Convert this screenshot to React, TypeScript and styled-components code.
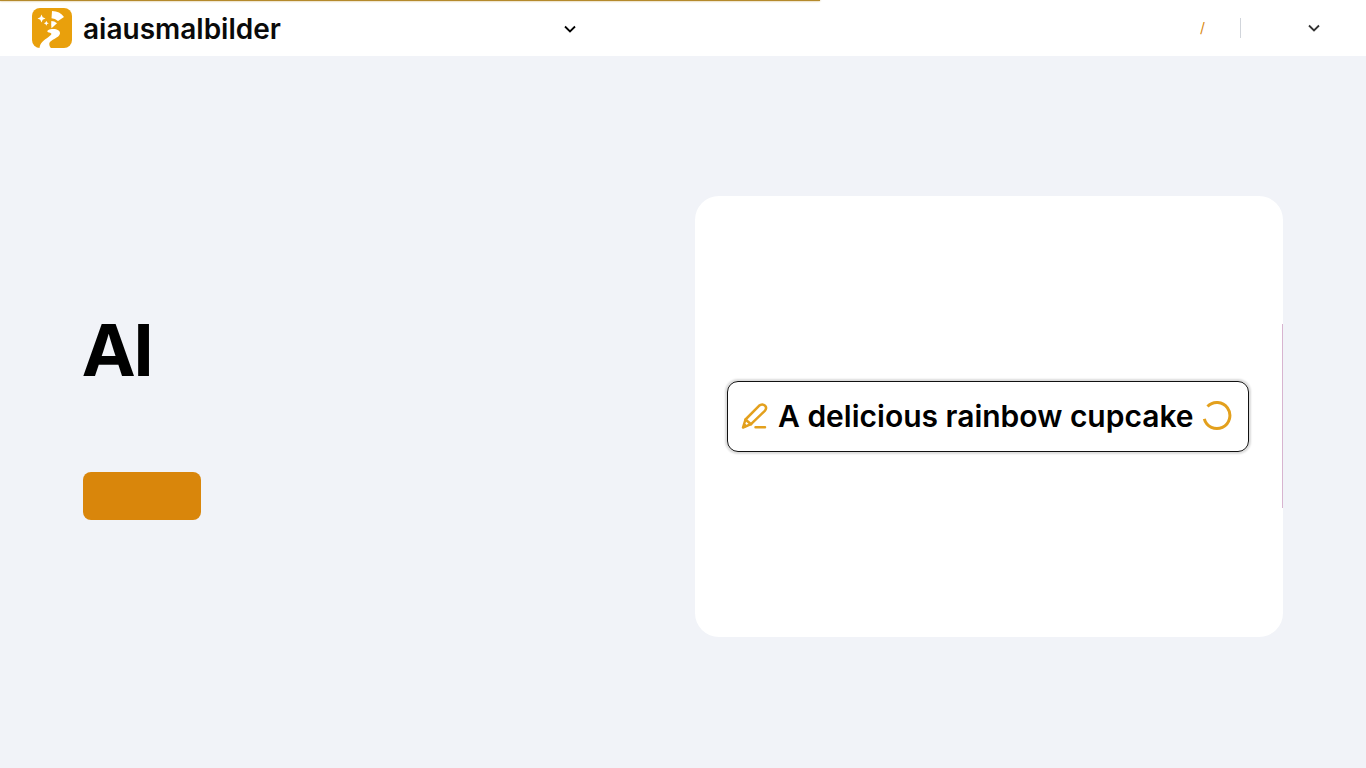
import React from "react";
import styled, { createGlobalStyle } from "styled-components";

const GlobalStyle = createGlobalStyle`
  *, *::before, *::after { box-sizing: border-box; }
  body {
    margin: 0;
    background: #f1f3f8;
    color: #000;
    font-family: Inter, "Liberation Sans", sans-serif;
  }
`;

const Progress = styled.div`
  position: absolute;
  top: 0;
  left: 0;
  width: 60%;
  height: 1px;
  background: #b58a2c;
  box-shadow: 0 0 2px #b58a2c;
`;

const Header = styled.header`
  display: flex;
  align-items: center;
  height: 56px;
  padding: 0 44px 0 32px;
  background: #fff;
`;

const Brand = styled.a`
  display: flex;
  flex: 1;
  align-items: center;
  gap: 10px;
  color: #0a0a0a;
  text-decoration: none;
`;

const BrandName = styled.span`
  padding-top: 2px;
  font-size: 28px;
  font-weight: 600;
  line-height: 40px;
`;

const MenuButton = styled.button<{ $color: string }>`
  display: flex;
  align-items: center;
  justify-content: center;
  width: 16px;
  height: 24px;
  padding: 0;
  border: 0;
  background: none;
  color: ${(p) => p.$color};
`;

const Nav = styled.nav`
  padding-right: 214px;
  padding-top: 2px;
`;

const Account = styled.div`
  display: flex;
  flex: 1;
  align-items: center;
  justify-content: flex-end;
`;

const Slash = styled.span`
  color: #d9860b;
  font-size: 14px;
  line-height: 20px;
`;

const Divider = styled.span`
  width: 1px;
  height: 20px;
  margin: 0 65px 0 35px;
  background: #d1d5db;
`;

const Hero = styled.main`
  display: grid;
  grid-template-columns: repeat(2, minmax(0, 1fr));
  gap: 24px;
  align-items: center;
  max-width: 1200px;
  min-height: calc(100vh - 56px);
  margin: 0 auto;
  padding-top: 8px;
`;

const Intro = styled.section`
  display: flex;
  flex-direction: column;
  align-items: flex-start;
  gap: 84px;
`;

const Title = styled.h1`
  margin: 0;
  font-family: "Inter Display", Inter, "Liberation Sans", sans-serif;
  font-size: 72px;
  font-weight: 700;
  line-height: 76px;
`;

const ActionButton = styled.button`
  width: 118px;
  height: 48px;
  border: 0;
  border-radius: 8px;
  background: #d9860b;
`;

const Preview = styled.section`
  display: flex;
  align-items: center;
  aspect-ratio: 4 / 3;
  padding-left: 32px;
  border-radius: 24px;
  background: #fff;
  overflow: hidden;
`;

const Prompt = styled.div`
  display: flex;
  flex: 1;
  align-items: center;
  height: 71px;
  padding: 0 16px 0 12px;
  border: 1px solid #111;
  border-radius: 11px;
  box-shadow: 0 0 2px 2px rgba(0, 0, 0, 0.14);
`;

const PromptText = styled.p`
  flex: 1;
  margin: 0 0 0 10px;
  font-size: 30px;
  font-weight: 600;
  line-height: 40px;
  white-space: nowrap;
`;

const NextSlide = styled.div`
  width: 1px;
  height: 184px;
  margin-left: 33px;
  background: #d8b4d0;
`;

const LogoMark = () => (
  <svg width="41" height="40" viewBox="0 0 41 40" aria-hidden="true">
    <rect width="40" height="40" rx="8" fill="#e9a00c" />
    <g fill="#fff">
      <path d="M20 3Q28 3 32 9L26 13Q23 10.5 19.5 10.3Z" />
      <path d="M19.3 13Q22.5 13 25 15.2L19.5 20.3Q19 17 19.3 13Z" />
      <path d="M18.5 21.2C23 20.2 28.3 21.5 28 25.5C27.5 30 18 31.5 17.3 35.5C17.2 37.5 18 39 19 40H7.5C8 35 12 32 16.5 29C20 26.5 20.5 25.3 17 24.5C14.2 23.7 15 22 18.5 21.2Z" />
      <path d="M9.5 6.5L10.7 9.3L13.5 10.5L10.7 11.7L9.5 14.5L8.3 11.7L5.5 10.5L8.3 9.3Z" />
      <path d="M14.3 12.8L15.1 14.5L16.8 15.3L15.1 16.1L14.3 17.8L13.5 16.1L11.8 15.3L13.5 14.5Z" />
    </g>
  </svg>
);

const Chevron = () => (
  <svg width="12" height="8" viewBox="0 0 12 8" fill="none" stroke="currentColor" strokeWidth="1.8" aria-hidden="true">
    <path d="M1 1.5L6 6.5L11 1.5" />
  </svg>
);

const PencilIcon = () => (
  <svg width="28" height="28" viewBox="0 0 28 28" fill="none" stroke="#e3a01d" strokeWidth="2.5" strokeLinecap="round" strokeLinejoin="round" aria-hidden="true">
    <path d="M3 25.5L5.5 17.5L19 3.8C21 2 23.5 2.2 25 3.7C26.4 5.2 26.2 7.3 24.8 8.8L11 22.2L3 25.5Z" />
    <path d="M5.5 17.5L11 22.2M15.5 25.2H25" />
    <path d="M3 25.5L4.3 21.5L7 24Z" fill="#e3a01d" strokeWidth="1" />
  </svg>
);

const Spinner = () => (
  <svg width="30" height="30" viewBox="0 0 30 30" fill="none" aria-hidden="true">
    <path d="M5.5 5.5A13 13 0 1 1 2.3 17.8" stroke="#e3a01d" strokeWidth="3" />
  </svg>
);

export default function App() {
  return (
    <>
      <GlobalStyle />
      <Progress />
      <Header>
        <Brand href="#">
          <LogoMark />
          <BrandName>aiausmalbilder</BrandName>
        </Brand>
        <Nav>
          <MenuButton $color="#000" type="button" aria-label="Menu">
            <Chevron />
          </MenuButton>
        </Nav>
        <Account>
          <Slash>/</Slash>
          <Divider />
          <MenuButton $color="#333" type="button" aria-label="Language">
            <Chevron />
          </MenuButton>
        </Account>
      </Header>
      <Hero>
        <Intro>
          <Title>AI</Title>
          <ActionButton type="button" aria-label="Start" />
        </Intro>
        <Preview>
          <Prompt>
            <PencilIcon />
            <PromptText>A delicious rainbow cupcake</PromptText>
            <Spinner />
          </Prompt>
          <NextSlide />
        </Preview>
      </Hero>
    </>
  );
}
